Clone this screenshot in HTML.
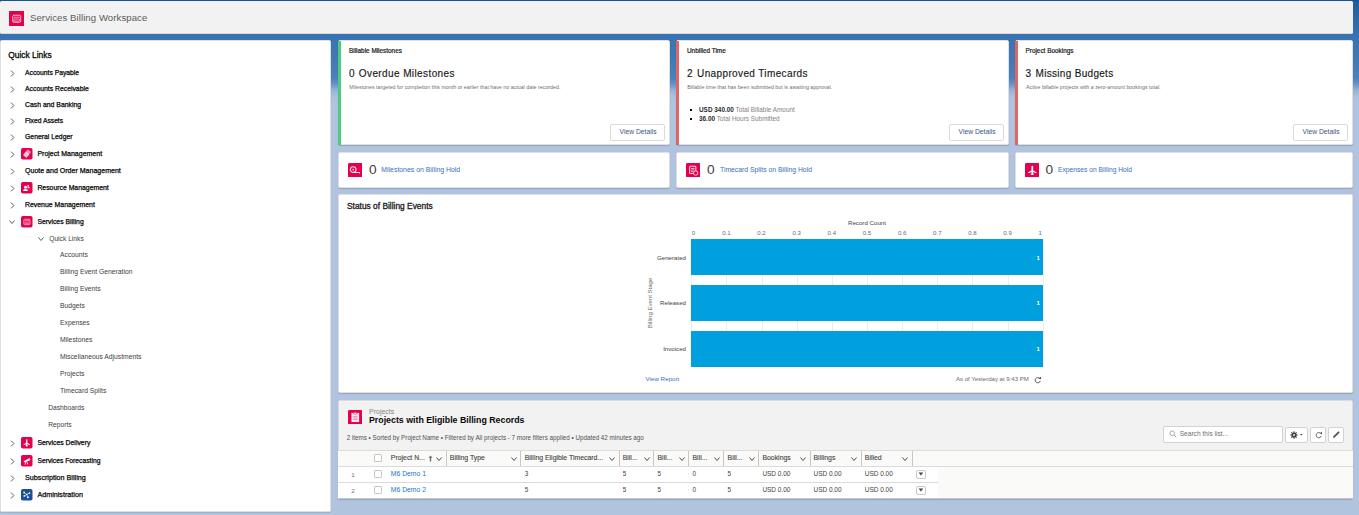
<!DOCTYPE html>
<html><head><meta charset="utf-8">
<style>
*{box-sizing:border-box;margin:0;padding:0}
html,body{width:1359px;height:515px;overflow:hidden}
body{position:relative;background:#b0c4df;font-family:"Liberation Sans",sans-serif;color:#080707}
.a{position:absolute;white-space:nowrap;line-height:1}
svg.a{display:block}
#band{position:absolute;left:0;top:0;width:1359px;height:130px;background:linear-gradient(to bottom,#0b4d96 0px,#1d5c9e 1px,#2e6aa8 20px,#3a73b1 37px,#4179b6 60px,#4b81bb 78px,#6892c5 84px,#95b3d8 90px,#aac0dd 96px,#b0c4df 104px)}
</style></head><body>
<div id="band"></div>
<div class="a" style="left:0px;top:1px;width:1353px;height:32px;background:#f3f2f2;border-radius:1.5px;box-shadow:0 1px 0 #dcd8d4"></div>
<svg class="a" style="left:8.5px;top:10.5px" width="15" height="15" viewBox="0 0 16 16"><rect width="16" height="16" rx="0.32" fill="#e5004d"/><g opacity=".8"><rect x="4" y="4.5" width="8.5" height="7.5" rx="1.2" fill="none" stroke="#fff" stroke-width="1"/><rect x="5" y="6.2" width="6.5" height="0.8" fill="#fff"/><rect x="5.2" y="8.6" width="6.1" height="2.2" rx="1" fill="none" stroke="#fff" stroke-width="0.8"/></g></svg>
<div class="a" style="left:30px;top:13.00px;font-size:9.6px;font-weight:normal;color:#5a5a5a;letter-spacing:0.07px">Services Billing Workspace</div>
<div class="a" style="left:0px;top:40px;width:331px;height:472px;background:#fff;border-radius:1.5px;border:1px solid #e2e0de;box-shadow:0 1px 1px rgba(0,0,0,.1)"></div>
<div class="a" style="left:8.3px;top:51.00px;font-size:8.4px;font-weight:normal;color:#080707;-webkit-text-stroke:0.3px #080707;">Quick Links</div>
<svg class="a" style="left:10.1px;top:69.8px" width="5" height="7" viewBox="0 0 5 7"><polyline points="1,0.6 3.9,3.5 1,6.4" fill="none" stroke="#5c5c5c" stroke-width="1"/></svg>
<div class="a" style="left:25px;top:70.00px;font-size:6.76px;font-weight:normal;color:#080707;-webkit-text-stroke:0.25px #080707;">Accounts Payable</div>
<svg class="a" style="left:10.1px;top:85.7px" width="5" height="7" viewBox="0 0 5 7"><polyline points="1,0.6 3.9,3.5 1,6.4" fill="none" stroke="#5c5c5c" stroke-width="1"/></svg>
<div class="a" style="left:25px;top:86.00px;font-size:6.83px;font-weight:normal;color:#080707;-webkit-text-stroke:0.25px #080707;">Accounts Receivable</div>
<svg class="a" style="left:10.1px;top:102.0px" width="5" height="7" viewBox="0 0 5 7"><polyline points="1,0.6 3.9,3.5 1,6.4" fill="none" stroke="#5c5c5c" stroke-width="1"/></svg>
<div class="a" style="left:25px;top:102.00px;font-size:6.88px;font-weight:normal;color:#080707;-webkit-text-stroke:0.25px #080707;">Cash and Banking</div>
<svg class="a" style="left:10.1px;top:118.0px" width="5" height="7" viewBox="0 0 5 7"><polyline points="1,0.6 3.9,3.5 1,6.4" fill="none" stroke="#5c5c5c" stroke-width="1"/></svg>
<div class="a" style="left:25px;top:118.00px;font-size:6.72px;font-weight:normal;color:#080707;-webkit-text-stroke:0.25px #080707;">Fixed Assets</div>
<svg class="a" style="left:10.1px;top:134.0px" width="5" height="7" viewBox="0 0 5 7"><polyline points="1,0.6 3.9,3.5 1,6.4" fill="none" stroke="#5c5c5c" stroke-width="1"/></svg>
<div class="a" style="left:25px;top:134.00px;font-size:6.85px;font-weight:normal;color:#080707;-webkit-text-stroke:0.25px #080707;">General Ledger</div>
<svg class="a" style="left:10.1px;top:151.0px" width="5" height="7" viewBox="0 0 5 7"><polyline points="1,0.6 3.9,3.5 1,6.4" fill="none" stroke="#5c5c5c" stroke-width="1"/></svg>
<svg class="a" style="left:21.3px;top:148.2px" width="11.5" height="11.5" viewBox="0 0 16 16"><rect width="16" height="16" rx="2.50" fill="#e5004d"/><g fill="#fff"><rect x="7" y="3" width="6" height="6" rx="1" transform="rotate(40 10 6)" opacity=".55"/><rect x="4" y="6" width="6.5" height="6.5" rx="1" transform="rotate(40 7.25 9.25)" opacity=".7"/><circle cx="6" cy="10" r="0.9"/></g></svg>
<div class="a" style="left:37.4px;top:150.00px;font-size:7.02px;font-weight:normal;color:#080707;-webkit-text-stroke:0.25px #080707;">Project Management</div>
<svg class="a" style="left:10.1px;top:168.0px" width="5" height="7" viewBox="0 0 5 7"><polyline points="1,0.6 3.9,3.5 1,6.4" fill="none" stroke="#5c5c5c" stroke-width="1"/></svg>
<div class="a" style="left:25px;top:167.00px;font-size:7.04px;font-weight:normal;color:#080707;-webkit-text-stroke:0.25px #080707;">Quote and Order Management</div>
<svg class="a" style="left:10.1px;top:185.0px" width="5" height="7" viewBox="0 0 5 7"><polyline points="1,0.6 3.9,3.5 1,6.4" fill="none" stroke="#5c5c5c" stroke-width="1"/></svg>
<svg class="a" style="left:21.3px;top:182.2px" width="11.5" height="11.5" viewBox="0 0 16 16"><rect width="16" height="16" rx="2.50" fill="#e5004d"/><g fill="#fff"><circle cx="6.3" cy="7.3" r="2"/><path d="M2.8 12.6 Q2.8 9.8 6.3 9.8 Q9.8 9.8 9.8 12.6Z"/><rect x="9.2" y="3.8" width="1.5" height="4.5" rx="0.7"/><rect x="9.2" y="7.2" width="3.2" height="1.4" rx="0.7"/></g></svg>
<div class="a" style="left:37.4px;top:185.00px;font-size:6.87px;font-weight:normal;color:#080707;-webkit-text-stroke:0.25px #080707;">Resource Management</div>
<svg class="a" style="left:10.1px;top:202.0px" width="5" height="7" viewBox="0 0 5 7"><polyline points="1,0.6 3.9,3.5 1,6.4" fill="none" stroke="#5c5c5c" stroke-width="1"/></svg>
<div class="a" style="left:25px;top:202.00px;font-size:6.92px;font-weight:normal;color:#080707;-webkit-text-stroke:0.25px #080707;">Revenue Management</div>
<svg class="a" style="left:9.3px;top:220.2px" width="6" height="4" viewBox="0 0 6 4"><polyline points="0.5,0.5 3.0,3.5 5.5,0.5" fill="none" stroke="#5c5c5c" stroke-width="1"/></svg>
<svg class="a" style="left:21.3px;top:216.2px" width="11.5" height="11.5" viewBox="0 0 16 16"><rect width="16" height="16" rx="2.50" fill="#e5004d"/><g opacity=".8"><rect x="4" y="4.5" width="8.5" height="7.5" rx="1.2" fill="none" stroke="#fff" stroke-width="1"/><rect x="5" y="6.2" width="6.5" height="0.8" fill="#fff"/><rect x="5.2" y="8.6" width="6.1" height="2.2" rx="1" fill="none" stroke="#fff" stroke-width="0.8"/></g></svg>
<div class="a" style="left:37.4px;top:219.00px;font-size:6.83px;font-weight:normal;color:#080707;-webkit-text-stroke:0.25px #080707;">Services Billing</div>
<svg class="a" style="left:10.1px;top:440.2px" width="5" height="7" viewBox="0 0 5 7"><polyline points="1,0.6 3.9,3.5 1,6.4" fill="none" stroke="#5c5c5c" stroke-width="1"/></svg>
<svg class="a" style="left:21.3px;top:437.4px" width="11.5" height="11.5" viewBox="0 0 16 16"><rect width="16" height="16" rx="2.50" fill="#e5004d"/><g fill="#fff"><rect x="7.1" y="3" width="1.8" height="10" rx="0.9"/><rect x="6.2" y="11.8" width="3.6" height="1.2" rx="0.5"/><path d="M7.4 8 L3.2 10.4 L4 11.2 L7.6 9.6Z"/><path d="M8.6 8 L12.8 10.4 L12 11.2 L8.4 9.6Z"/></g></svg>
<div class="a" style="left:37.4px;top:440.00px;font-size:6.86px;font-weight:normal;color:#080707;-webkit-text-stroke:0.25px #080707;">Services Delivery</div>
<svg class="a" style="left:10.1px;top:458.0px" width="5" height="7" viewBox="0 0 5 7"><polyline points="1,0.6 3.9,3.5 1,6.4" fill="none" stroke="#5c5c5c" stroke-width="1"/></svg>
<svg class="a" style="left:21.3px;top:455.2px" width="11.5" height="11.5" viewBox="0 0 16 16"><rect width="16" height="16" rx="2.50" fill="#e5004d"/><g fill="#fff"><path d="M3.6 8.6 L10.8 5 L11.9 7.5 L4.6 10.6Z"/><path d="M10.6 4.5 L12 3.8 L13.2 7.4 L11.9 8Z" opacity=".8"/><path d="M6.3 9.6 L5 13.2 L6 13.4 L7.2 9.6Z"/><path d="M7.6 9.4 L9 13.2 L10 13 L8.6 9.2Z"/></g></svg>
<div class="a" style="left:37.4px;top:458.00px;font-size:6.75px;font-weight:normal;color:#080707;-webkit-text-stroke:0.25px #080707;">Services Forecasting</div>
<svg class="a" style="left:10.1px;top:475.0px" width="5" height="7" viewBox="0 0 5 7"><polyline points="1,0.6 3.9,3.5 1,6.4" fill="none" stroke="#5c5c5c" stroke-width="1"/></svg>
<div class="a" style="left:25px;top:474.00px;font-size:7.2px;font-weight:normal;color:#080707;-webkit-text-stroke:0.25px #080707;">Subscription Billing</div>
<svg class="a" style="left:10.1px;top:491.8px" width="5" height="7" viewBox="0 0 5 7"><polyline points="1,0.6 3.9,3.5 1,6.4" fill="none" stroke="#5c5c5c" stroke-width="1"/></svg>
<svg class="a" style="left:21.3px;top:489.0px" width="11.5" height="11.5" viewBox="0 0 16 16"><rect width="16" height="16" rx="2.50" fill="#1d4f9a"/><g stroke="#fff" stroke-width="1" fill="none" opacity=".85"><path d="M8 7.6 L4.3 4.8 M8 7.6 L11.8 5.6 M8 7.6 L4.6 9.6 M8 7.6 L9.6 11.6"/></g><g fill="#fff" opacity=".9"><circle cx="4.3" cy="4.8" r="1.3"/><circle cx="11.8" cy="5.6" r="1.2"/><circle cx="4.6" cy="9.6" r="1.3"/><circle cx="9.6" cy="11.6" r="1.4"/><circle cx="8" cy="7.6" r="1.1"/></g></svg>
<div class="a" style="left:37.4px;top:491.00px;font-size:7.2px;font-weight:normal;color:#080707;-webkit-text-stroke:0.25px #080707;">Administration</div>
<svg class="a" style="left:37.5px;top:237.2px" width="6" height="4" viewBox="0 0 6 4"><polyline points="0.5,0.5 3.0,3.5 5.5,0.5" fill="none" stroke="#5c5c5c" stroke-width="1"/></svg>
<div class="a" style="left:49.2px;top:236.00px;font-size:6.7px;font-weight:normal;color:#3e3e3c;">Quick Links</div>
<div class="a" style="left:60px;top:252.00px;font-size:6.75px;font-weight:normal;color:#3e3e3c;">Accounts</div>
<div class="a" style="left:60px;top:269.00px;font-size:6.75px;font-weight:normal;color:#3e3e3c;">Billing Event Generation</div>
<div class="a" style="left:60px;top:286.00px;font-size:6.75px;font-weight:normal;color:#3e3e3c;">Billing Events</div>
<div class="a" style="left:60px;top:303.00px;font-size:6.75px;font-weight:normal;color:#3e3e3c;">Budgets</div>
<div class="a" style="left:60px;top:320.00px;font-size:6.75px;font-weight:normal;color:#3e3e3c;">Expenses</div>
<div class="a" style="left:60px;top:337.00px;font-size:6.75px;font-weight:normal;color:#3e3e3c;">Milestones</div>
<div class="a" style="left:60px;top:354.00px;font-size:6.75px;font-weight:normal;color:#3e3e3c;">Miscellaneous Adjustments</div>
<div class="a" style="left:60px;top:371.00px;font-size:6.75px;font-weight:normal;color:#3e3e3c;">Projects</div>
<div class="a" style="left:60px;top:388.00px;font-size:6.75px;font-weight:normal;color:#3e3e3c;">Timecard Splits</div>
<div class="a" style="left:48.2px;top:405.00px;font-size:6.7px;font-weight:normal;color:#3e3e3c;">Dashboards</div>
<div class="a" style="left:48.2px;top:422.00px;font-size:6.7px;font-weight:normal;color:#3e3e3c;">Reports</div>
<div class="a" style="left:338px;top:40px;width:332px;height:105px;background:#fff;border-radius:2px;border:1px solid #e2e0de;box-shadow:0 1px 1px rgba(0,0,0,.16)"></div>
<div class="a" style="left:338px;top:41px;width:3px;height:104px;background:#4bca81"></div>
<div class="a" style="left:676px;top:40px;width:333px;height:105px;background:#fff;border-radius:2px;border:1px solid #e2e0de;box-shadow:0 1px 1px rgba(0,0,0,.16)"></div>
<div class="a" style="left:676px;top:41px;width:3px;height:104px;background:#e06662"></div>
<div class="a" style="left:1015px;top:40px;width:338px;height:105px;background:#fff;border-radius:2px;border:1px solid #e2e0de;box-shadow:0 1px 1px rgba(0,0,0,.16)"></div>
<div class="a" style="left:1015px;top:41px;width:3px;height:104px;background:#e06662"></div>
<div class="a" style="left:349px;top:48.00px;font-size:6.4px;font-weight:normal;color:#181818;-webkit-text-stroke:0.2px #181818;">Billable Milestones</div>
<div class="a" style="left:349px;top:69.00px;font-size:10px;font-weight:normal;color:#181818;-webkit-text-stroke:0.15px #181818;">0</div>
<div class="a" style="left:358.8px;top:69.00px;font-size:10px;font-weight:normal;color:#181818;-webkit-text-stroke:0.15px #181818;letter-spacing:0.4px">Overdue Milestones</div>
<div class="a" style="left:349.3px;top:85.00px;font-size:5.3px;font-weight:normal;color:#706e6b;">Milestones targeted for completion this month or earlier that have no actual date recorded.</div>
<div class="a" style="left:610px;top:124px;width:55px;height:17px;background:#fff;border:1px solid #dddbda;border-radius:2px"></div>
<div class="a" style="left:619.5px;top:129.00px;font-size:6.75px;font-weight:normal;color:#3b5584;">View Details</div>
<div class="a" style="left:687px;top:48.00px;font-size:6.4px;font-weight:normal;color:#181818;-webkit-text-stroke:0.2px #181818;">Unbilled Time</div>
<div class="a" style="left:687px;top:69.00px;font-size:10px;font-weight:normal;color:#181818;-webkit-text-stroke:0.15px #181818;">2</div>
<div class="a" style="left:697.1px;top:69.00px;font-size:10px;font-weight:normal;color:#181818;-webkit-text-stroke:0.15px #181818;letter-spacing:0.37px">Unapproved Timecards</div>
<div class="a" style="left:687.3px;top:85.00px;font-size:5.3px;font-weight:normal;color:#706e6b;">Billable time that has been submitted but is awaiting approval.</div>
<div class="a" style="left:690px;top:108.6px;width:2px;height:2px;background:#080707"></div>
<div class="a" style="left:699px;top:107.00px;font-size:6.4px;font-weight:normal;color:#858380;"><b style='color:#2b2b2b'>USD 340.00</b> Total Billable Amount</div>
<div class="a" style="left:690px;top:118px;width:2px;height:2px;background:#080707"></div>
<div class="a" style="left:699px;top:116.00px;font-size:6.4px;font-weight:normal;color:#858380;"><b style='color:#2b2b2b'>36.00</b> Total Hours Submitted</div>
<div class="a" style="left:949px;top:124px;width:55px;height:17px;background:#fff;border:1px solid #dddbda;border-radius:2px"></div>
<div class="a" style="left:958.5px;top:129.00px;font-size:6.75px;font-weight:normal;color:#3b5584;">View Details</div>
<div class="a" style="left:1025.5px;top:48.00px;font-size:6.4px;font-weight:normal;color:#181818;-webkit-text-stroke:0.2px #181818;">Project Bookings</div>
<div class="a" style="left:1025.5px;top:69.00px;font-size:10px;font-weight:normal;color:#181818;-webkit-text-stroke:0.15px #181818;">3</div>
<div class="a" style="left:1035.5px;top:69.00px;font-size:10px;font-weight:normal;color:#181818;-webkit-text-stroke:0.15px #181818;letter-spacing:0.31px">Missing Budgets</div>
<div class="a" style="left:1026px;top:85.00px;font-size:5.3px;font-weight:normal;color:#706e6b;">Active billable projects with a zero-amount bookings total.</div>
<div class="a" style="left:1293px;top:124px;width:55px;height:17px;background:#fff;border:1px solid #dddbda;border-radius:2px"></div>
<div class="a" style="left:1302.5px;top:129.00px;font-size:6.75px;font-weight:normal;color:#3b5584;">View Details</div>
<div class="a" style="left:338px;top:152px;width:332px;height:36px;background:#fff;border-radius:2px;border:1px solid #e2e0de;box-shadow:0 1px 1px rgba(0,0,0,.16)"></div>
<div class="a" style="left:676px;top:152px;width:333px;height:36px;background:#fff;border-radius:2px;border:1px solid #e2e0de;box-shadow:0 1px 1px rgba(0,0,0,.16)"></div>
<div class="a" style="left:1015px;top:152px;width:338px;height:36px;background:#fff;border-radius:2px;border:1px solid #e2e0de;box-shadow:0 1px 1px rgba(0,0,0,.16)"></div>
<svg class="a" style="left:347.7px;top:162.5px" width="14.6" height="14.6" viewBox="0 0 16 16"><rect width="16" height="16" rx="1.64" fill="#e5004d"/><g opacity=".85"><circle cx="5.7" cy="7.2" r="3.1" fill="none" stroke="#fff" stroke-width="1.2"/><circle cx="5.7" cy="7.2" r="1" fill="#fff"/><path d="M5.7 10.3 L12.6 10.3 L12.6 11.6" fill="none" stroke="#fff" stroke-width="1.1"/></g></svg>
<div class="a" style="left:369px;top:163.00px;font-size:13.7px;font-weight:normal;color:#3e3e3c;">0</div>
<div class="a" style="left:381.3px;top:167.00px;font-size:6.9px;font-weight:normal;color:#3b6cc4;">Milestones on Billing Hold</div>
<svg class="a" style="left:685.6px;top:162.5px" width="14.6" height="14.6" viewBox="0 0 16 16"><rect width="16" height="16" rx="1.64" fill="#e5004d"/><g opacity=".85"><rect x="4" y="3.6" width="6.8" height="8" rx="1" fill="none" stroke="#fff" stroke-width="1.1"/><rect x="5.5" y="5.4" width="3.8" height="0.9" fill="#fff"/><rect x="5.5" y="7.2" width="3.8" height="0.9" fill="#fff"/><rect x="5.5" y="9" width="2.5" height="0.9" fill="#fff"/><circle cx="10.6" cy="11" r="2.4" fill="#e5004d" stroke="#fff" stroke-width="1"/></g></svg>
<div class="a" style="left:707px;top:163.00px;font-size:13.7px;font-weight:normal;color:#3e3e3c;">0</div>
<div class="a" style="left:720px;top:167.00px;font-size:6.8px;font-weight:normal;color:#3b6cc4;">Timecard Splits on Billing Hold</div>
<svg class="a" style="left:1024.6px;top:162.5px" width="14.6" height="14.6" viewBox="0 0 16 16"><rect width="16" height="16" rx="1.64" fill="#e5004d"/><g fill="#fff"><rect x="7.1" y="3" width="1.8" height="10" rx="0.9"/><rect x="6.2" y="11.8" width="3.6" height="1.2" rx="0.5"/><path d="M7.4 8 L3.2 10.4 L4 11.2 L7.6 9.6Z"/><path d="M8.6 8 L12.8 10.4 L12 11.2 L8.4 9.6Z"/></g></svg>
<div class="a" style="left:1045.4px;top:163.00px;font-size:13.7px;font-weight:normal;color:#3e3e3c;">0</div>
<div class="a" style="left:1058px;top:167.00px;font-size:6.7px;font-weight:normal;color:#3b6cc4;">Expenses on Billing Hold</div>
<div class="a" style="left:338px;top:194px;width:1015px;height:199px;background:#fff;border-radius:2px;border:1px solid #e2e0de;box-shadow:0 1px 1px rgba(0,0,0,.16)"></div>
<div class="a" style="left:347px;top:202.00px;font-size:8.4px;font-weight:normal;color:#181818;-webkit-text-stroke:0.3px #181818;">Status of Billing Events</div>
<div class="a" style="left:848px;top:220.00px;font-size:6.16px;font-weight:normal;color:#3e3e3c;">Record Count</div>
<div class="a" style="left:691px;top:239px;width:1px;height:128px;background:#ececec"></div>
<div class="a" style="left:0px;top:230.00px;font-size:6.1px;font-weight:normal;color:#6b6b6b;left:auto;width:30px;text-align:center;transform:translateX(678.5px)">0</div>
<div class="a" style="left:726px;top:239px;width:1px;height:128px;background:#ececec"></div>
<div class="a" style="left:0px;top:230.00px;font-size:6.1px;font-weight:normal;color:#6b6b6b;left:auto;width:30px;text-align:center;transform:translateX(711.4px)">0.1</div>
<div class="a" style="left:762px;top:239px;width:1px;height:128px;background:#ececec"></div>
<div class="a" style="left:0px;top:230.00px;font-size:6.1px;font-weight:normal;color:#6b6b6b;left:auto;width:30px;text-align:center;transform:translateX(746.5px)">0.2</div>
<div class="a" style="left:797px;top:239px;width:1px;height:128px;background:#ececec"></div>
<div class="a" style="left:0px;top:230.00px;font-size:6.1px;font-weight:normal;color:#6b6b6b;left:auto;width:30px;text-align:center;transform:translateX(781.7px)">0.3</div>
<div class="a" style="left:832px;top:239px;width:1px;height:128px;background:#ececec"></div>
<div class="a" style="left:0px;top:230.00px;font-size:6.1px;font-weight:normal;color:#6b6b6b;left:auto;width:30px;text-align:center;transform:translateX(816.8px)">0.4</div>
<div class="a" style="left:867px;top:239px;width:1px;height:128px;background:#ececec"></div>
<div class="a" style="left:0px;top:230.00px;font-size:6.1px;font-weight:normal;color:#6b6b6b;left:auto;width:30px;text-align:center;transform:translateX(852.0px)">0.5</div>
<div class="a" style="left:902px;top:239px;width:1px;height:128px;background:#ececec"></div>
<div class="a" style="left:0px;top:230.00px;font-size:6.1px;font-weight:normal;color:#6b6b6b;left:auto;width:30px;text-align:center;transform:translateX(887.2px)">0.6</div>
<div class="a" style="left:937px;top:239px;width:1px;height:128px;background:#ececec"></div>
<div class="a" style="left:0px;top:230.00px;font-size:6.1px;font-weight:normal;color:#6b6b6b;left:auto;width:30px;text-align:center;transform:translateX(922.3px)">0.7</div>
<div class="a" style="left:972px;top:239px;width:1px;height:128px;background:#ececec"></div>
<div class="a" style="left:0px;top:230.00px;font-size:6.1px;font-weight:normal;color:#6b6b6b;left:auto;width:30px;text-align:center;transform:translateX(957.5px)">0.8</div>
<div class="a" style="left:1008px;top:239px;width:1px;height:128px;background:#ececec"></div>
<div class="a" style="left:0px;top:230.00px;font-size:6.1px;font-weight:normal;color:#6b6b6b;left:auto;width:30px;text-align:center;transform:translateX(992.6px)">0.9</div>
<div class="a" style="left:1043px;top:239px;width:1px;height:128px;background:#ececec"></div>
<div class="a" style="left:0px;top:230.00px;font-size:6.1px;font-weight:normal;color:#6b6b6b;left:auto;width:30px;text-align:center;transform:translateX(1025.2px)">1</div>
<div class="a" style="left:691.2px;top:238.9px;width:351.6px;height:36.3px;background:#00a0df"></div>
<div class="a" style="left:0px;top:255.00px;font-size:6.14px;font-weight:normal;color:#3e3e3c;width:686px;text-align:right">Generated</div>
<div class="a" style="left:1036.6px;top:255.00px;font-size:6.0px;font-weight:bold;color:#fff;">1</div>
<div class="a" style="left:691.2px;top:284.8px;width:351.6px;height:36.3px;background:#00a0df"></div>
<div class="a" style="left:0px;top:300.00px;font-size:6.14px;font-weight:normal;color:#3e3e3c;width:686px;text-align:right">Released</div>
<div class="a" style="left:1036.6px;top:300.00px;font-size:6.0px;font-weight:bold;color:#fff;">1</div>
<div class="a" style="left:691.2px;top:330.7px;width:351.6px;height:36.3px;background:#00a0df"></div>
<div class="a" style="left:0px;top:346.00px;font-size:6.14px;font-weight:normal;color:#3e3e3c;width:686px;text-align:right">Invoiced</div>
<div class="a" style="left:1036.6px;top:346.00px;font-size:6.0px;font-weight:bold;color:#fff;">1</div>
<div class="a" style="left:650px;top:303px;font-size:6.04px;color:#6b6b6b;transform:translate(-50%,-50%) rotate(-90deg)">Billing Event Stage</div>
<div class="a" style="left:645.6px;top:376.00px;font-size:6.19px;font-weight:normal;color:#3b6cc4;">View Report</div>
<div class="a" style="left:955.9px;top:376.00px;font-size:6.05px;font-weight:normal;color:#6b6b6b;">As of Yesterday at 9:43 PM</div>
<svg class="a" style="left:1033.5px;top:375.5px" width="8" height="8" viewBox="0 0 8 8"><path d="M5.7 2.4 A2.6 2.6 0 1 0 6.3 4.9" fill="none" stroke="#444" stroke-width="0.9"/><path d="M4.6 2.5 L6.9 0.7 L7 3.2Z" fill="#444"/></svg>
<div class="a" style="left:338px;top:400px;width:1015px;height:99px;background:#f3f2f2;border-radius:2px;border:1px solid #dddbda;box-shadow:0 1px 1px rgba(0,0,0,.16)"></div>
<svg class="a" style="left:347.7px;top:409.7px" width="14.6" height="14.6" viewBox="0 0 16 16"><rect width="16" height="16" rx="1.64" fill="#e5004d"/><path d="M3.8 3.2 H12.2 V13.2 H3.8Z" fill="#fff" opacity=".92"/><ellipse cx="8" cy="3.6" rx="2.2" ry="1" fill="#fff" stroke="#e5004d" stroke-width="0.7"/><g fill="#e5004d" opacity=".45"><rect x="5.7" y="6.5" width="4.6" height="1"/><rect x="5.7" y="8.3" width="4.6" height="1"/><rect x="5.7" y="10.1" width="4.6" height="1"/></g></svg>
<div class="a" style="left:369px;top:408.00px;font-size:7.0px;font-weight:normal;color:#858380;">Projects</div>
<div class="a" style="left:369px;top:416.00px;font-size:8.81px;font-weight:bold;color:#080707;">Projects with Eligible Billing Records</div>
<div class="a" style="left:346.7px;top:435.00px;font-size:6.27px;font-weight:normal;color:#514f4d;">2 items • Sorted by Project Name • Filtered by All projects - 7 more filters applied • Updated 42 minutes ago</div>
<div class="a" style="left:1163px;top:426px;width:120px;height:17px;background:#fff;border:1px solid #d4d2d0;border-radius:2px"></div>
<svg class="a" style="left:1169px;top:430px" width="8" height="8" viewBox="0 0 8 8"><circle cx="3.2" cy="3.2" r="2.3" fill="none" stroke="#9a9896" stroke-width="0.8"/><path d="M5 5 L7.3 7.3" stroke="#9a9896" stroke-width="0.9"/></svg>
<div class="a" style="left:1179.7px;top:431.00px;font-size:6.6px;font-weight:normal;color:#706e6b;">Search this list...</div>
<div class="a" style="left:1285px;top:427px;width:23px;height:16px;background:#fff;border:1px solid #d4d2d0;border-radius:2px"></div>
<div class="a" style="left:1310px;top:427px;width:16px;height:16px;background:#fff;border:1px solid #d4d2d0;border-radius:2px"></div>
<div class="a" style="left:1328px;top:427px;width:16px;height:16px;background:#fff;border:1px solid #d4d2d0;border-radius:2px"></div>
<svg class="a" style="left:1290px;top:431px" width="14" height="8" viewBox="0 0 14 8"><circle cx="4" cy="4" r="2.6" fill="#444"/><circle cx="4" cy="4" r="0.9" fill="#fff"/><g stroke="#444" stroke-width="1.1"><path d="M4 0.3 V7.7 M0.3 4 H7.7 M1.4 1.4 L6.6 6.6 M6.6 1.4 L1.4 6.6"/></g><circle cx="4" cy="4" r="0.9" fill="#fff"/><path d="M9.8 3 L12.6 3 L11.2 4.6Z" fill="#444"/></svg>
<svg class="a" style="left:1314.5px;top:430.5px" width="8" height="8" viewBox="0 0 8 8"><path d="M5.7 2.4 A2.6 2.6 0 1 0 6.3 4.9" fill="none" stroke="#555" stroke-width="0.9"/><path d="M4.6 2.5 L6.9 0.7 L7 3.2Z" fill="#555"/></svg>
<svg class="a" style="left:1332px;top:430px" width="9" height="9" viewBox="0 0 9 9"><path d="M1 8 L1.4 6.3 L6.4 1.3 L7.7 2.6 L2.7 7.6Z" fill="#555"/></svg>
<div class="a" style="left:338px;top:450px;width:1015px;height:49px;background:#fafaf9;border-top:1px solid #dddbda"></div>
<div class="a" style="left:338px;top:466px;width:600px;height:32px;background:#fff"></div>
<div class="a" style="left:338px;top:466px;width:1015px;height:1px;background:#dddbda"></div>
<div class="a" style="left:338px;top:482px;width:600px;height:1px;background:#dddbda"></div>
<div class="a" style="left:338px;top:498px;width:1015px;height:1px;background:#c9c7c5"></div>
<div class="a" style="left:390.8px;top:455.00px;font-size:6.9px;font-weight:normal;color:#3e3e3c;-webkit-text-stroke:0.1px #3e3e3c;">Project N...</div>
<svg class="a" style="left:435.5px;top:456.5px" width="6" height="4" viewBox="0 0 6 4"><polyline points="0.5,0.5 3.0,3.5 5.5,0.5" fill="none" stroke="#514f4d" stroke-width="1"/></svg>
<div class="a" style="left:446px;top:451px;width:1px;height:15px;background:#c9c7c5"></div>
<div class="a" style="left:449.8px;top:455.00px;font-size:6.9px;font-weight:normal;color:#3e3e3c;-webkit-text-stroke:0.1px #3e3e3c;">Billing Type</div>
<svg class="a" style="left:510.5px;top:456.5px" width="6" height="4" viewBox="0 0 6 4"><polyline points="0.5,0.5 3.0,3.5 5.5,0.5" fill="none" stroke="#514f4d" stroke-width="1"/></svg>
<div class="a" style="left:520px;top:451px;width:1px;height:15px;background:#c9c7c5"></div>
<div class="a" style="left:524.7px;top:455.00px;font-size:6.9px;font-weight:normal;color:#3e3e3c;-webkit-text-stroke:0.1px #3e3e3c;">Billing Eligible Timecard...</div>
<svg class="a" style="left:609.0px;top:456.5px" width="6" height="4" viewBox="0 0 6 4"><polyline points="0.5,0.5 3.0,3.5 5.5,0.5" fill="none" stroke="#514f4d" stroke-width="1"/></svg>
<div class="a" style="left:619px;top:451px;width:1px;height:15px;background:#c9c7c5"></div>
<div class="a" style="left:622.7px;top:455.00px;font-size:6.9px;font-weight:normal;color:#3e3e3c;-webkit-text-stroke:0.1px #3e3e3c;">Bill...</div>
<svg class="a" style="left:643.5px;top:456.5px" width="6" height="4" viewBox="0 0 6 4"><polyline points="0.5,0.5 3.0,3.5 5.5,0.5" fill="none" stroke="#514f4d" stroke-width="1"/></svg>
<div class="a" style="left:653px;top:451px;width:1px;height:15px;background:#c9c7c5"></div>
<div class="a" style="left:657.5px;top:455.00px;font-size:6.9px;font-weight:normal;color:#3e3e3c;-webkit-text-stroke:0.1px #3e3e3c;">Bill...</div>
<svg class="a" style="left:678.5px;top:456.5px" width="6" height="4" viewBox="0 0 6 4"><polyline points="0.5,0.5 3.0,3.5 5.5,0.5" fill="none" stroke="#514f4d" stroke-width="1"/></svg>
<div class="a" style="left:688px;top:451px;width:1px;height:15px;background:#c9c7c5"></div>
<div class="a" style="left:692.5px;top:455.00px;font-size:6.9px;font-weight:normal;color:#3e3e3c;-webkit-text-stroke:0.1px #3e3e3c;">Bill...</div>
<svg class="a" style="left:713.5px;top:456.5px" width="6" height="4" viewBox="0 0 6 4"><polyline points="0.5,0.5 3.0,3.5 5.5,0.5" fill="none" stroke="#514f4d" stroke-width="1"/></svg>
<div class="a" style="left:723px;top:451px;width:1px;height:15px;background:#c9c7c5"></div>
<div class="a" style="left:727.6px;top:455.00px;font-size:6.9px;font-weight:normal;color:#3e3e3c;-webkit-text-stroke:0.1px #3e3e3c;">Bill...</div>
<svg class="a" style="left:748.5px;top:456.5px" width="6" height="4" viewBox="0 0 6 4"><polyline points="0.5,0.5 3.0,3.5 5.5,0.5" fill="none" stroke="#514f4d" stroke-width="1"/></svg>
<div class="a" style="left:758px;top:451px;width:1px;height:15px;background:#c9c7c5"></div>
<div class="a" style="left:762.4px;top:455.00px;font-size:6.9px;font-weight:normal;color:#3e3e3c;-webkit-text-stroke:0.1px #3e3e3c;">Bookings</div>
<svg class="a" style="left:799.5px;top:456.5px" width="6" height="4" viewBox="0 0 6 4"><polyline points="0.5,0.5 3.0,3.5 5.5,0.5" fill="none" stroke="#514f4d" stroke-width="1"/></svg>
<div class="a" style="left:810px;top:451px;width:1px;height:15px;background:#c9c7c5"></div>
<div class="a" style="left:813.5px;top:455.00px;font-size:6.9px;font-weight:normal;color:#3e3e3c;-webkit-text-stroke:0.1px #3e3e3c;">Billings</div>
<svg class="a" style="left:850.5px;top:456.5px" width="6" height="4" viewBox="0 0 6 4"><polyline points="0.5,0.5 3.0,3.5 5.5,0.5" fill="none" stroke="#514f4d" stroke-width="1"/></svg>
<div class="a" style="left:861px;top:451px;width:1px;height:15px;background:#c9c7c5"></div>
<div class="a" style="left:864.8px;top:455.00px;font-size:6.9px;font-weight:normal;color:#3e3e3c;-webkit-text-stroke:0.1px #3e3e3c;">Billed</div>
<svg class="a" style="left:901.5px;top:456.5px" width="6" height="4" viewBox="0 0 6 4"><polyline points="0.5,0.5 3.0,3.5 5.5,0.5" fill="none" stroke="#514f4d" stroke-width="1"/></svg>
<div class="a" style="left:912px;top:451px;width:1px;height:15px;background:#c9c7c5"></div>
<svg class="a" style="left:428px;top:455px" width="5" height="7" viewBox="0 0 5 7"><path d="M2.5 0.5 L0.5 2.8 H1.8 V6.5 H3.2 V2.8 H4.5Z" fill="#706e6b"/></svg>
<div class="a" style="left:374px;top:454px;width:8px;height:8px;background:#fff;border:1px solid #c9c7c5;border-radius:1px"></div>
<div class="a" style="left:374px;top:470px;width:8px;height:8px;background:#fff;border:1px solid #c9c7c5;border-radius:1px"></div>
<div class="a" style="left:374px;top:486px;width:8px;height:8px;background:#fff;border:1px solid #c9c7c5;border-radius:1px"></div>
<div class="a" style="left:351.3px;top:472.00px;font-size:6.2px;font-weight:normal;color:#706e6b;">1</div>
<div class="a" style="left:390.8px;top:471.00px;font-size:6.8px;font-weight:normal;color:#1a73d1;">M6 Demo 1</div>
<div class="a" style="left:524.7px;top:471.00px;font-size:6.3px;font-weight:normal;color:#3e3e3c;">3</div>
<div class="a" style="left:622.7px;top:471.00px;font-size:6.3px;font-weight:normal;color:#3e3e3c;">5</div>
<div class="a" style="left:657.5px;top:471.00px;font-size:6.3px;font-weight:normal;color:#3e3e3c;">5</div>
<div class="a" style="left:692.5px;top:471.00px;font-size:6.3px;font-weight:normal;color:#3e3e3c;">0</div>
<div class="a" style="left:727.6px;top:471.00px;font-size:6.3px;font-weight:normal;color:#3e3e3c;">5</div>
<div class="a" style="left:762.4px;top:471.00px;font-size:6.46px;font-weight:normal;color:#3e3e3c;">USD 0.00</div>
<div class="a" style="left:813.5px;top:471.00px;font-size:6.46px;font-weight:normal;color:#3e3e3c;">USD 0.00</div>
<div class="a" style="left:864.8px;top:471.00px;font-size:6.46px;font-weight:normal;color:#3e3e3c;">USD 0.00</div>
<div class="a" style="left:916px;top:469.8px;width:9.6px;height:9px;background:#fff;border:1px solid #c9c7c5;border-radius:2px"></div>
<svg class="a" style="left:918px;top:471.8px" width="6" height="5" viewBox="0 0 6 5"><path d="M0.6 0.6 H5.2 L2.9 3.6Z" fill="#444"/></svg>
<div class="a" style="left:351.3px;top:488.00px;font-size:6.2px;font-weight:normal;color:#706e6b;">2</div>
<div class="a" style="left:390.8px;top:487.00px;font-size:6.8px;font-weight:normal;color:#1a73d1;">M6 Demo 2</div>
<div class="a" style="left:524.7px;top:487.00px;font-size:6.3px;font-weight:normal;color:#3e3e3c;">5</div>
<div class="a" style="left:622.7px;top:487.00px;font-size:6.3px;font-weight:normal;color:#3e3e3c;">5</div>
<div class="a" style="left:657.5px;top:487.00px;font-size:6.3px;font-weight:normal;color:#3e3e3c;">5</div>
<div class="a" style="left:692.5px;top:487.00px;font-size:6.3px;font-weight:normal;color:#3e3e3c;">0</div>
<div class="a" style="left:727.6px;top:487.00px;font-size:6.3px;font-weight:normal;color:#3e3e3c;">5</div>
<div class="a" style="left:762.4px;top:487.00px;font-size:6.46px;font-weight:normal;color:#3e3e3c;">USD 0.00</div>
<div class="a" style="left:813.5px;top:487.00px;font-size:6.46px;font-weight:normal;color:#3e3e3c;">USD 0.00</div>
<div class="a" style="left:864.8px;top:487.00px;font-size:6.46px;font-weight:normal;color:#3e3e3c;">USD 0.00</div>
<div class="a" style="left:916px;top:485.8px;width:9.6px;height:9px;background:#fff;border:1px solid #c9c7c5;border-radius:2px"></div>
<svg class="a" style="left:918px;top:487.8px" width="6" height="5" viewBox="0 0 6 5"><path d="M0.6 0.6 H5.2 L2.9 3.6Z" fill="#444"/></svg>
</body></html>
